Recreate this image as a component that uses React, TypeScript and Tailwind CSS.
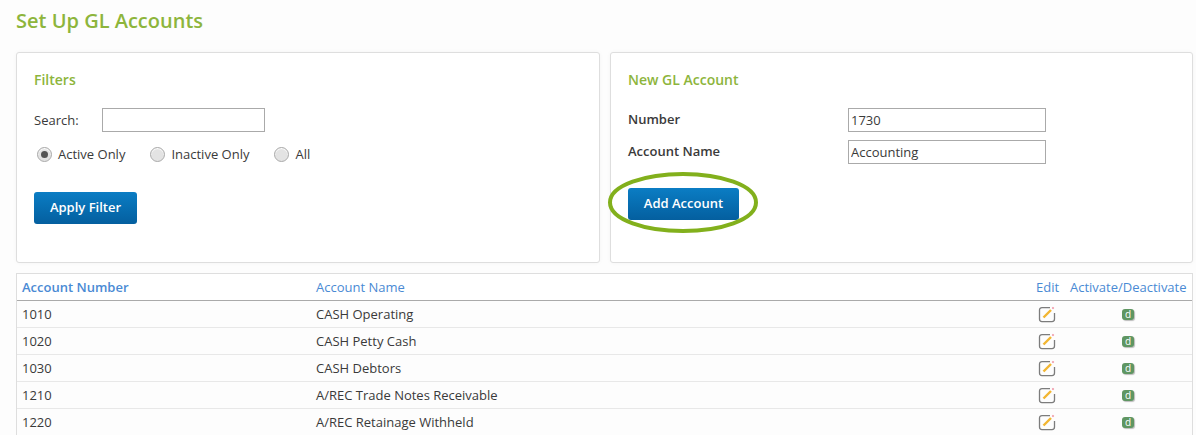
import React from "react";

const rows = [
  { number: "1010", name: "CASH Operating" },
  { number: "1020", name: "CASH Petty Cash" },
  { number: "1030", name: "CASH Debtors" },
  { number: "1210", name: "A/REC Trade Notes Receivable" },
  { number: "1220", name: "A/REC Retainage Withheld" },
];

const EditIcon = () => (
  <svg width="18" height="18" viewBox="0 0 18 18" fill="none">
    <path d="M12 2.6H4a2.5 2.5 0 0 0-2.5 2.5v9a2.5 2.5 0 0 0 2.5 2.5h10a2.5 2.5 0 0 0 2.5-2.5V8" stroke="#7c7c7c" strokeWidth="1.3" />
    <path d="M5.5 12.5 13 5" stroke="#f2b632" strokeWidth="2.4" />
    <path d="M14.4 3.6 15.6 2.4" stroke="#ee8f9f" strokeWidth="1.8" />
  </svg>
);

const Radio = ({ label, checked }: { label: string; checked?: boolean }) => (
  <label className="flex items-center gap-[6px]">
    <span className="flex h-[15px] w-[15px] items-center justify-center rounded-full border border-[#aaa] bg-[#e3e3e3] shadow-[inset_0_1px_1px_#fff]">
      {checked && <span className="h-[7px] w-[7px] rounded-full bg-[#555]" />}
    </span>
    <span>{label}</span>
  </label>
);

const BlueButton = ({ children, className }: { children: React.ReactNode; className?: string }) => (
  <button className={`h-8 rounded-[3px] bg-gradient-to-b from-[#0b7dc4] to-[#045f9f] text-[13px] font-semibold text-white ${className}`}>
    {children}
  </button>
);

export default function App() {
  return (
    <div className="h-[435px] overflow-hidden bg-[#fdfdfd] px-4 pr-[3px] font-['Open_Sans',sans-serif] text-[13px] text-[#3a3a3a]">
      <h1 className="pt-[8px] text-[20px] leading-[26px] font-semibold text-[#8db53c]">Set Up GL Accounts</h1>

      <div className="mt-[18px] flex gap-[10px]">
        <section className="h-[211px] w-[584px] rounded-[3px] border border-[#dedede] bg-white px-[17px] pt-[17px] shadow-[0_0_4px_rgba(0,0,0,0.04)]">
          <h2 className="text-[14px] leading-[20px] font-semibold text-[#8db53c]">Filters</h2>
          <div className="mt-[18px] flex items-center">
            <span className="w-[68px] pt-[2px]">Search:</span>
            <input className="h-6 w-[163px] border border-[#aaa] bg-white" />
          </div>
          <div className="mt-[12px] flex items-center gap-[25px] pl-[3px] leading-[20px]">
            <Radio label="Active Only" checked />
            <Radio label="Inactive Only" />
            <Radio label="All" />
          </div>
          <BlueButton className="mt-[28px] w-[103px]">Apply Filter</BlueButton>
        </section>

        <section className="relative h-[211px] w-[583px] rounded-[3px] border border-[#dedede] bg-white px-[17px] pt-[17px] shadow-[0_0_4px_rgba(0,0,0,0.04)]">
          <h2 className="text-[14px] leading-[20px] font-semibold text-[#8db53c]">New GL Account</h2>
          <div className="mt-[18px] flex items-center">
            <span className="w-[220px] font-semibold">Number</span>
            <input readOnly value="1730" className="h-6 w-[198px] border border-[#aaa] bg-white px-[2px] text-[13px]" />
          </div>
          <div className="mt-[8px] flex items-center">
            <span className="w-[220px] font-semibold">Account Name</span>
            <input readOnly value="Accounting" className="h-6 w-[198px] border border-[#aaa] bg-white px-[2px] text-[13px]" />
          </div>
          <BlueButton className="mt-[24px] w-[111px]">Add Account</BlueButton>
          {/* hand-drawn callout around the button */}
          <svg className="absolute top-[119px] -left-[3px]" width="150" height="61" viewBox="0 0 150 61" fill="none">
            <path d="M2 30.5C2 13 38 2 75 2C112 2 148 13 148 30.5C148 48 112 59 75 59C38 59 2 48 2 30.5Z" stroke="#82b01c" strokeWidth="4" />
          </svg>
        </section>
      </div>

      <div className="mt-[10px] border-t border-l border-r border-[#dedede] bg-white">
        <div className="flex h-[27px] items-center border-b border-[#aaa] text-[#4a8ad4]">
          <div className="w-[299px] pt-[2px] pl-[5px] font-semibold">Account Number</div>
          <div className="flex-1 pt-[2px]">Account Name</div>
          <div className="w-[34px] pt-[2px]">Edit</div>
          <div className="w-[122px] pt-[2px]">Activate/Deactivate</div>
        </div>
        {rows.map((row) => (
          <div key={row.number} className="flex h-[27px] items-center border-b border-[#e8e8e8] bg-[#fdfdfd]">
            <div className="w-[299px] pt-[2px] pl-[5px]">{row.number}</div>
            <div className="flex-1 pt-[2px]">{row.name}</div>
            <div className="flex w-[34px] items-center pl-[2px]">
              <EditIcon />
            </div>
            <div className="flex w-[122px] items-center justify-center pr-[6px]">
              <span className="flex h-[11px] w-[12px] items-center justify-center rounded-[3px] bg-[#5f9662] text-[10px] leading-none text-white shadow-[1px_1px_1px_#bbb]">
                d
              </span>
            </div>
          </div>
        ))}
      </div>
    </div>
  );
}
